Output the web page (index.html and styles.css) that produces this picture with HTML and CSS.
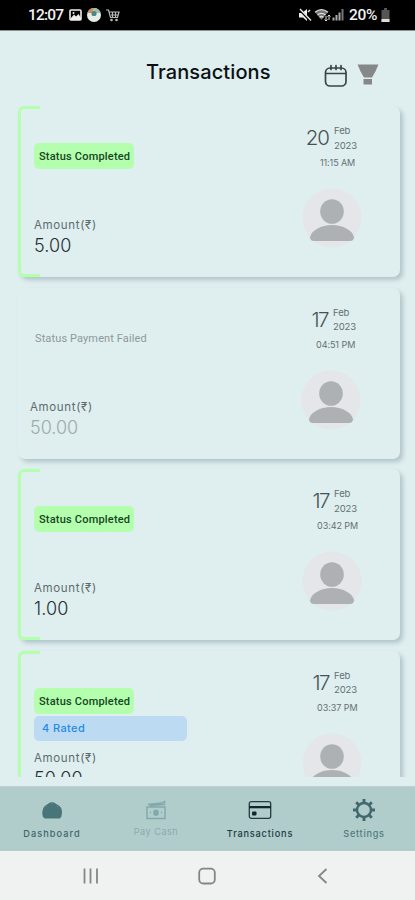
FILE: index.html
```html
<!DOCTYPE html>
<html lang="en">
<head>
<meta charset="utf-8">
<title>Transactions</title>
<link rel="stylesheet" href="styles.css">
</head>
<body>
<svg width="0" height="0" class="defs">
  <symbol id="person" viewBox="0 0 60 60">
    <circle cx="30" cy="30" r="29.5" fill="#e4e6ea"/>
    <ellipse cx="30" cy="23.500" rx="11.8" ry="12.3" fill="#adb1b4"/>
    <path d="M8 49.500C9 42.500 19 37 30 37S51 42.500 52 49.500Q51.500 53 48 53H12Q8.500 53 8 49.500Z" fill="#adb1b4"/>
  </symbol>
</svg>
<div class="phone">
  <div class="status-bar">
    <span class="clock">12:07</span>
    <svg class="notif" width="52" height="16" viewBox="0 0 52 16">
      <rect x="1" y="3" width="11" height="10" rx="1" fill="none" stroke="#eee" stroke-width="1.600"/>
      <path d="M2 11l3-3.500 2 2 2.500-2.500L12 11v2H2z" fill="#eee"/><circle cx="4.500" cy="6" r="1" fill="#eee"/>
      <circle cx="25" cy="8" r="7" fill="#e6ece6"/>
      <path d="M18.500 6a7 7 0 0 1 6.500-5l-1 5z" fill="#c98f63"/><path d="M25 1a7 7 0 0 1 6.500 5H25z" fill="#9cc0ae"/>
      <circle cx="25" cy="6.500" r="2.600" fill="#4f8782"/>
      <path d="M37 3h2.500l2 7.500h7l1.500-5.500H40.500M42 8h7M43.500 5v5M46.500 5v5" fill="none" stroke="#b8b8b8" stroke-width="1.200"/>
      <circle cx="42.500" cy="13" r="1.300" fill="#bbb"/><circle cx="47.500" cy="13" r="1.300" fill="#bbb"/>
    </svg>
    <svg class="signals" width="50" height="16" viewBox="0 0 50 16">
      <path d="M1 6h3l5-4v12L5 10.500H1z" fill="#eee"/><path d="M1 2l11 11.500" stroke="#000" stroke-width="2.500"/><path d="M2 2l11 11.500" stroke="#eee" stroke-width="1.300"/><path d="M10 5l2-2" stroke="#ddd" stroke-width="1.400"/>
      <path d="M17 5q6-5 13 0l-6.500 8z" fill="#777"/>
      <path d="M17 5.200q6.500-5 13 0M19.500 8q4-3.200 8 0M21.500 10.300q2-1.600 4 0" fill="none" stroke="#ddd" stroke-width="1.300"/>
      <path d="M28 9v5m-1.500-1.500L28 14l1.500-1.500M31 13V8m-1.500 1.500L31 8l1.500 1.500" stroke="#ddd" fill="none"/>
      <path d="M35.500 10.500v3M38.500 8v5.500M41.500 5.500v8" stroke="#aaa" stroke-width="2"/><path d="M44.500 2v11.500" stroke="#777" stroke-width="2"/>
    </svg>
    <span class="percent">20%</span>
    <svg class="battery" width="9" height="14" viewBox="0 0 9 14"><path d="M3 0h3v2h2.500v12H.5V2H3z" fill="#555"/><path d="M.5 11h8v3h-8z" fill="#ddd"/></svg>
  </div>

  <header class="header">
    <h1 class="title">Transactions</h1>
    <svg class="calendar" width="24" height="24" viewBox="0 0 24 24" fill="none" stroke="#38464a" stroke-width="1.700" stroke-linecap="round"><rect x="1.500" y="4" width="20.500" height="18" rx="4.500"/><path d="M2 9.500h20M7 1.500v4M12 1.500v4M17 1.500v4"/></svg>
    <svg class="funnel" width="22" height="22" viewBox="0 0 22 22" fill="#858789"><path d="M.5.500h21Q18.500 8 15 13.500H7Q3.500 8 .5.500z"/><path d="M6.500 15h8.500v5.500H6.500z"/></svg>
  </header>

  <main class="list">
    <article class="card completed">
      <div class="details">
        <span class="badge">Status Completed</span>
        <div class="amount-label">Amount(₹)</div>
        <div class="amount">5.00</div>
      </div>
      <div class="meta">
        <div class="date"><span class="day">20</span><span class="month">Feb<br>2023</span></div>
        <div class="time narrow">11:15 AM</div>
        <svg class="avatar"><use href="#person"/></svg>
      </div>
    </article>

    <article class="card failed">
      <div class="details">
        <span class="badge">Status Payment Failed</span>
        <div class="amount-label">Amount(₹)</div>
        <div class="amount">50.00</div>
      </div>
      <div class="meta">
        <div class="date"><span class="day slim">17</span><span class="month">Feb<br>2023</span></div>
        <div class="time">04:51 PM</div>
        <svg class="avatar"><use href="#person"/></svg>
      </div>
    </article>

    <article class="card completed">
      <div class="details">
        <span class="badge">Status Completed</span>
        <div class="amount-label">Amount(₹)</div>
        <div class="amount">1.00</div>
      </div>
      <div class="meta">
        <div class="date"><span class="day slim">17</span><span class="month">Feb<br>2023</span></div>
        <div class="time">03:42 PM</div>
        <svg class="avatar"><use href="#person"/></svg>
      </div>
    </article>

    <article class="card completed rated">
      <div class="details">
        <span class="badge">Status Completed</span>
        <div class="rating">4 Rated</div>
        <div class="amount-label">Amount(₹)</div>
        <div class="amount">50.00</div>
      </div>
      <div class="meta">
        <div class="date"><span class="day slim">17</span><span class="month">Feb<br>2023</span></div>
        <div class="time">03:37 PM</div>
        <svg class="avatar"><use href="#person"/></svg>
      </div>
    </article>
  </main>

  <nav class="tabs">
    <div class="tab dashboard">
      <svg width="24" height="24" viewBox="0 0 24 24"><path d="M5 20.500Q2 19.500 2.300 14C3 10 4 8 7 6.500Q12 1.500 17 6.500C20 8 22 10 22 14Q22 19.500 19.500 20.500z" fill="#477579"/><path d="M12 4v2M6 8l1 1M18 8l-1 1" stroke="#73999b" stroke-width=".8"/></svg>
      <span>Dashboard</span>
    </div>
    <div class="tab cash">
      <svg width="24" height="24" viewBox="0 0 24 24" fill="none" stroke="#82a9aa" stroke-width="1.400"><path d="M3 9h18v11.500H3zM4 6.500l14-1.500 2.500-1.500V7M6 7.500l14-1"/><rect x="10" y="12.500" width="4" height="4.500" rx="1" fill="#82a9aa"/><path d="M6 14.500h1M17 14.500h1"/></svg>
      <span>Pay Cash</span>
    </div>
    <div class="tab active">
      <svg width="24" height="24" viewBox="0 0 24 24"><rect x="1.300" y="3.700" width="21.400" height="16.600" rx="2" fill="none" stroke="#263b40" stroke-width="1.300"/><path d="M1 8h22v2.300H1z" fill="#12272c"/><rect x="4" y="13.500" width="4.500" height="4" rx="1" fill="#12272c"/></svg>
      <span>Transactions</span>
    </div>
    <div class="tab settings">
      <svg width="24" height="24" viewBox="0 0 24 24" fill="none" stroke="#42686e"><circle cx="12" cy="12" r="7" stroke-width="2.400"/><path d="M12 5V1M12 19v4M5 12H1M19 12h4M7 7L4.200 4.200M17 7l2.800-2.800M7 17l-2.800 2.800M17 17l2.800 2.800" stroke-width="2.900"/></svg>
      <span>Settings</span>
    </div>
  </nav>

  <footer class="system">
    <svg width="18" height="18" viewBox="0 0 18 18" stroke="#858585" stroke-width="1.800"><path d="M2.500 1.500v15M8.500 1.500v15M15 1.500v15"/></svg>
    <svg width="18" height="18" viewBox="0 0 18 18" fill="none" stroke="#858585" stroke-width="1.800"><rect x="1.200" y="1.700" width="15.600" height="14.800" rx="4"/></svg>
    <svg width="18" height="18" viewBox="0 0 18 18" fill="none" stroke="#858585" stroke-width="1.800"><path d="M12.500 2L5 9l7.500 7"/></svg>
  </footer>
</div>
</body>
</html>
```
FILE: styles.css
```css
*, *::before { box-sizing: border-box; }
body { margin: 0; background: #dfeeee; font-family: Inter, "Noto Sans", sans-serif; }
.defs { display: block; height: 0; }
.phone { width: 415px; height: 900px; display: flex; flex-direction: column; overflow: hidden; background: #dfeeee; }

.status-bar { height: 31px; flex: none; display: flex; align-items: center; background: #000; border-bottom: 1px solid #889293; padding: 0 25px 0 28px; color: #f2f2f2; font-family: Roboto, sans-serif; font-size: 15.5px; }
.clock { width: 40px; font-weight: 500; letter-spacing: -.8px; white-space: nowrap; }
.notif { margin-left: 1px; }
.signals { margin-left: auto; }
.percent { margin-left: 1px; width: 31px; font-weight: 500; letter-spacing: -.3px; }
.battery { margin-left: 1px; }

.header { height: 75px; flex: none; display: flex; align-items: flex-start; padding-left: 146px; }
.title { margin: 0; padding-top: 26px; width: 178px; font-size: 20px; line-height: 30px; font-weight: 500; letter-spacing: .1px; color: #0c1012; }
.calendar { margin-top: 33px; }
.funnel { margin: 33px 0 0 9px; }

.list { height: 671px; flex: none; overflow: hidden; padding: 0 15px 0 18px; display: flex; flex-direction: column; gap: 10.6px; }
.card { position: relative; height: 171px; flex: none; display: flex; border-radius: 7px; background: #dfeeee; box-shadow: 3px 3px 4px #b2c6ca; padding-left: 12px; }
.completed { padding-left: 16px; }
.completed::before { content: ""; position: absolute; left: 0; top: 0; width: 22px; height: 100%; border: 3.5px solid #b3ffad; border-top-width: 3px; border-bottom-width: 3px; border-right: 0; border-radius: 6px 0 0 6px; }
.details { flex: 1; padding-top: 37px; }
.badge { display: block; width: 100px; height: 26px; padding-left: 5px; border-radius: 5px; background: #b3ffad; font: 500 11px/27px Roboto, sans-serif; letter-spacing: .2px; color: #17451f; white-space: nowrap; }
.failed .badge { background: none; font-weight: 400; letter-spacing: .12px; color: #8b9a9c; }
.rating { width: 153px; height: 25px; margin-top: 2px; padding-left: 8px; border-radius: 5px; background: #bcdbf2; font-size: 11px; line-height: 24px; font-weight: 500; letter-spacing: .4px; color: #248be0; }
.amount-label { margin-top: 47px; font-size: 11.5px; line-height: 18px; letter-spacing: .65px; color: #5d6b6e; }
.amount { font-size: 18px; line-height: 24px; font-weight: 300; letter-spacing: .1px; color: #263034; }
.failed .amount { color: #9dabad; letter-spacing: 0; }
.rated .amount-label { margin-top: 8px; }

.meta { width: 100px; flex: none; padding-top: 18px; }
.date { display: flex; height: 32px; }
.failed .meta { width: 101px; }
.day { width: 24px; margin-left: 5px; font-size: 20.5px; line-height: 28px; font-weight: 300; letter-spacing: -1px; color: #455255; text-align: right; white-space: nowrap; display: flex; justify-content: flex-end; }
.slim { letter-spacing: -1.5px; }
.month { margin-left: 5px; font-size: 9.5px; line-height: 14.7px; letter-spacing: -.1px; color: #637174; }
.time { margin-left: 17px; font-size: 9px; line-height: 14px; letter-spacing: -.05px; color: #637174; white-space: nowrap; }
.narrow { margin-left: 20px; letter-spacing: -.1px; }
.avatar { display: block; width: 60px; height: 60px; margin: 18px 0 0 2px; }

.tabs { height: 65px; margin-top: 9px; flex: none; display: grid; grid-template-columns: repeat(4, 104px); background: #b0cdcc; border-top: 1px solid #bdd3d3; }
.tab { display: flex; flex-direction: column; align-items: center; padding-top: 11px; font-size: 9.2px; line-height: 12px; font-weight: 500; gap: 6px; color: #426568; letter-spacing: .5px; }
.dashboard { letter-spacing: 1.05px; }
.cash { color: #8cabae; font-weight: 400; gap: 4px; letter-spacing: .45px; }
.active { color: #203b40; letter-spacing: .8px; }
.settings { color: #527b7d; letter-spacing: .7px; }
.system { flex: 1; display: flex; justify-content: space-between; align-items: center; padding: 0 83px 0 82px; background: #f0f1f1; }
```
